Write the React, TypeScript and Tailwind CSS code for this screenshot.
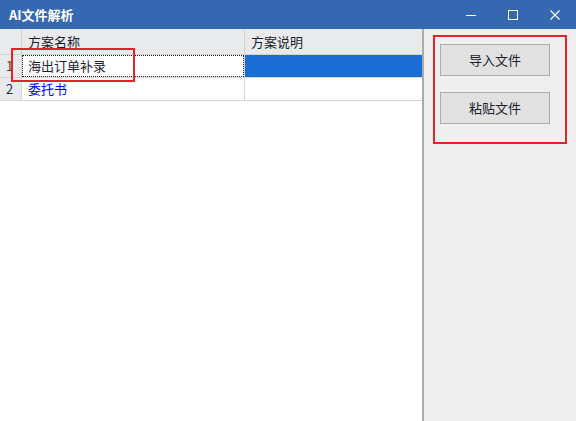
import React from "react";

const font = { fontFamily: '"Microsoft YaHei", "Noto Sans CJK SC", "Noto Sans", sans-serif' };

function TitleBar() {
  return (
    <div className="flex h-[29px] items-center bg-[#3568b1] pl-[9px] text-white">
      <div className="text-[13px] font-bold leading-none">AI文件解析</div>
      <div className="ml-auto flex h-full items-center">
        <div className="flex h-full w-[42px] items-center justify-center">
          <svg width="10" height="10" viewBox="0 0 10 10">
            <line x1="0" y1="5.5" x2="10" y2="5.5" stroke="white" strokeWidth="1" />
          </svg>
        </div>
        <div className="flex h-full w-[42px] items-center justify-center">
          <svg width="10" height="10" viewBox="0 0 10 10">
            <rect x="0.5" y="0.5" width="9" height="9" fill="none" stroke="white" strokeWidth="1" />
          </svg>
        </div>
        <div className="flex h-full w-[42px] items-center justify-center">
          <svg width="10" height="10" viewBox="0 0 10 10">
            <path d="M0.5 0.5 L9.5 9.5 M9.5 0.5 L0.5 9.5" stroke="white" strokeWidth="1.2" />
          </svg>
        </div>
      </div>
    </div>
  );
}

function Grid() {
  return (
    <div className="relative w-[422px] shrink-0 bg-white text-[13px] text-[#1e1e2c]">
      <div className="flex h-[26px] border-b border-[#d2d2d2] bg-[#e9eaec]">
        <div className="w-[22px] border-r border-[#d2d2d2]" />
        <div className="flex w-[223px] items-center border-r border-[#d2d2d2] pl-[6px]">方案名称</div>
        <div className="flex flex-1 items-center pl-[6px]">方案说明</div>
      </div>
      <div className="flex h-[23px] border-b border-[#d5d5d5]">
        <div className="flex w-[22px] items-center border-r border-[#d5d5d5] bg-[#e9eaec] pl-[6px] text-[#4a4020]">1</div>
        <div className="flex w-[223px] items-center border-r border-[#d5d5d5]">
          <div className="flex h-full w-full items-center border border-dotted border-[#222] pl-[5px]">海出订单补录</div>
        </div>
        <div className="flex-1 bg-[#1a6dd2]" />
      </div>
      <div className="flex h-[23px] border-b border-[#d5d5d5]">
        <div className="flex w-[22px] items-center border-r border-[#d5d5d5] bg-[#e9eaec] pl-[6px] text-[#20304a]">2</div>
        <div className="flex w-[223px] items-center border-r border-[#d5d5d5] pl-[6px] text-[#0000ff]">委托书</div>
        <div className="flex-1" />
      </div>
      <div className="pointer-events-none absolute left-[11px] top-[19px] h-[34px] w-[124px] border-2 border-[#e8202a]" />
    </div>
  );
}

function SidePanel() {
  return (
    <div className="relative flex-1 border-l-2 border-[#ababab] bg-[#efefef] pl-[16px] pt-[15px] text-[13px] text-[#1e1e2c]">
      <div className="flex flex-col gap-[16px]">
        <button className="flex h-[32px] w-[110px] items-center justify-center border border-[#adadad] bg-[#e1e1e1]">导入文件</button>
        <button className="flex h-[32px] w-[110px] items-center justify-center border border-[#adadad] bg-[#e1e1e1]">粘贴文件</button>
      </div>
      <div className="pointer-events-none absolute left-[9px] top-[6px] h-[109px] w-[134px] border-2 border-[#e8202a]" />
    </div>
  );
}

export default function App() {
  return (
    <div className="flex h-[421px] w-[576px] flex-col overflow-hidden bg-white" style={font}>
      <TitleBar />
      <div className="flex flex-1">
        <Grid />
        <SidePanel />
      </div>
    </div>
  );
}
